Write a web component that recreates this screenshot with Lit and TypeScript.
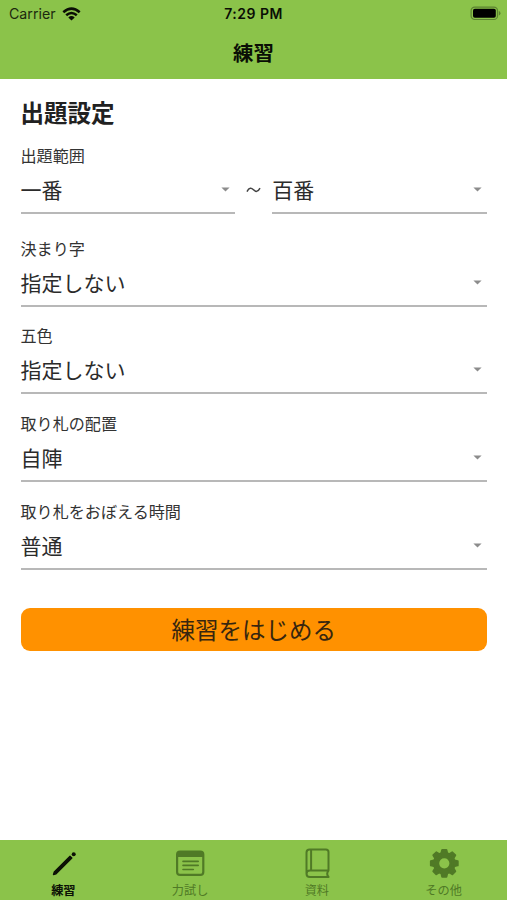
import { LitElement, html, css, svg } from "lit";
import { customElement, property } from "lit/decorators.js";

const icons = {
  pencil: svg`<path d="M5.4 26.6 L6.2 23.9 L22 8.1 L23.9 10 L8.1 25.8 Z" fill="currentColor" stroke="currentColor" stroke-width="1.2" stroke-linejoin="round"/><circle cx="25.7" cy="6.3" r="2" fill="currentColor"/>`,
  list: svg`<rect x="2.1" y="3.6" width="26.2" height="23.3" rx="3" fill="none" stroke="currentColor" stroke-width="2.2"/><path d="M2 6Q2 3.5 5 3.5H25.4Q28.4 3.5 28.4 6V9H2Z" fill="currentColor"/><path d="M8 13.4H23.2M8 17.4H23.2M8 21.5H18.3" stroke="currentColor" stroke-width="1.6" stroke-linecap="round"/>`,
  book: svg`<path d="M26.5 22.6V4Q26.5 1.4 23.9 1.4H7.7Q4.5 1.4 4.5 4.6V25.8Q4.5 29 7.9 29H26.5M4.5 26Q4.5 22.6 8 22.6H26.5Q23.9 25.8 26.5 29M9.1 1.4V22.6" fill="none" stroke="currentColor" stroke-width="2" stroke-linejoin="round" stroke-linecap="round"/>`,
  gear: svg`<circle cx="15.3" cy="15.3" r="8.2" fill="none" stroke="currentColor" stroke-width="6.2"/>${[0, 45, 90, 135, 180, 225, 270, 315].map(
    (a) => svg`<path d="M12 7L13.2 1.9H17.4L18.6 7Z" fill="currentColor" stroke="currentColor" stroke-width="2" stroke-linejoin="round" transform="rotate(${a} 15.3 15.3)"/>`
  )}`,
};

@customElement("select-field")
class SelectField extends LitElement {
  @property() value = "";

  static styles = css`
    :host { display: block; }
    .box {
      display: flex;
      align-items: center;
      justify-content: space-between;
      height: 48px;
      box-sizing: border-box;
      border-bottom: 2px solid #b8b8b8;
      padding-right: 5px;
      font-size: 21px;
      line-height: 30px;
      color: #2b2b2b;
    }
    .arrow { width: 9px; height: 5px; fill: #8c8c8c; display: block; margin-top: 1px; }
  `;

  render() {
    return html`<div class="box">
      <span>${this.value}</span>
      <svg class="arrow" viewBox="0 0 9 5"><path d="M.4 .4H8.6L4.5 4.6Z" /></svg>
    </div>`;
  }
}

@customElement("app-root")
class AppRoot extends LitElement {
  static styles = css`
    :host {
      display: flex;
      flex-direction: column;
      height: 900px;
      background: #fff;
      font-family: "Noto Sans CJK JP", sans-serif;
      color: #212121;
      overflow: hidden;
    }
    header { height: 79px; background: #8bc34a; color: #0a0e05; flex: none; }
    .status {
      display: grid;
      grid-template-columns: 1fr auto 1fr;
      align-items: center;
      height: 27px;
      padding: 0 6px 0 9px;
      font: 14.2px/20px Inter, sans-serif;
    }
    .carrier { display: flex; align-items: center; gap: 6px; color: #1c290e; }
    .time { font-weight: 600; font-size: 14px; letter-spacing: 0.5px; margin-right: 3px; }
    .wifi { width: 19px; height: 14px; display: block; }
    .battery { width: 31px; height: 15px; display: block; justify-self: end; }
    .bar {
      display: flex;
      justify-content: center;
      align-items: center;
      height: 49px;
      font-size: 20.4px;
      font-weight: 700;
    }
    main { flex: 1; padding: 14.4px 20px 0 20.5px; }
    h1 { margin: 0; padding-top: 0.6px; font-size: 23.5px; line-height: 36px; height: 52px; box-sizing: border-box; font-weight: 700; }
    .label { font-size: 16.1px; line-height: 20px; height: 21px; color: #333; }
    .group { height: 87.6px; }
    .range { height: 92.4px; }
    .pair {
      display: grid;
      grid-template-columns: 1fr 37px 1fr;
      align-items: center;
    }
    .tilde { display: flex; justify-content: center; }
    .tilde svg { width: 15px; height: 8px; display: block; }
    .start {
      display: flex;
      align-items: center;
      justify-content: center;
      width: 100%;
      height: 43px;
      margin-top: 20px;
      padding: 0 0 2px;
      border: 0;
      border-radius: 9px;
      background: #ff9100;
      color: #37260f;
      font: 400 23.5px/34px "Noto Sans CJK JP", sans-serif;
    }
    nav { display: grid; grid-template-columns: repeat(4, 1fr); height: 60px; background: #8bc34a; flex: none; }
    .tab {
      display: flex;
      flex-direction: column;
      align-items: center;
      padding-top: 7.5px;
      gap: 4.5px;
      color: #507a26;
      font-size: 12.2px;
      line-height: 16px;
    }
    .tab svg { width: 30px; height: 30px; display: block; }
    .active { color: #0c1106; font-weight: 700; }
  `;

  fields = [
    ["決まり字", "指定しない"],
    ["五色", "指定しない"],
    ["取り札の配置", "自陣"],
    ["取り札をおぼえる時間", "普通"],
  ];

  tabs = [
    { name: "練習", icon: icons.pencil, active: true },
    { name: "力試し", icon: icons.list, active: false },
    { name: "資料", icon: icons.book, active: false },
    { name: "その他", icon: icons.gear, active: false },
  ];

  render() {
    return html`
      <header>
        <div class="status">
          <span class="carrier">Carrier
            <svg class="wifi" viewBox="0 0 19 14" fill="none" stroke="#0a0e05" stroke-width="2.5">
              <path d="M1.3 5.3Q9.5-2.1 17.7 5.3M4.2 8.3Q9.5 3.6 14.8 8.3" />
              <path d="M6.3 10.4Q9.5 7.8 12.7 10.4L9.5 13.6Z" fill="#0a0e05" stroke="none" />
            </svg>
          </span>
          <span class="time">7:29 PM</span>
          <svg class="battery" viewBox="0 0 31 15">
            <rect x="1.1" y="1.1" width="26.4" height="12.4" rx="3.6" fill="none" stroke="#5c8331" stroke-width="1.2" />
            <rect x="3" y="2.8" width="22.8" height="9" rx="1.8" fill="#000" />
            <path d="M28.8 5V9.6Q30.5 9 30.5 7.3T28.8 5Z" fill="#5c8331" />
          </svg>
        </div>
        <div class="bar">練習</div>
      </header>
      <main>
        <h1>出題設定</h1>
        <div class="range">
          <div class="label">出題範囲</div>
          <div class="pair">
            <select-field .value=${"一番"}></select-field>
            <span class="tilde"><svg viewBox="0 0 15 8"><path d="M1 5.6C3.2 1.2 5.4 1.7 7.5 3.8S11.8 6.4 14 2.2" fill="none" stroke="#444" stroke-width="1.5" /></svg></span>
            <select-field .value=${"百番"}></select-field>
          </div>
        </div>
        ${this.fields.map(
          ([label, value]) => html`<div class="group">
            <div class="label">${label}</div>
            <select-field .value=${value}></select-field>
          </div>`
        )}
        <button class="start">練習をはじめる</button>
      </main>
      <nav>
        ${this.tabs.map(
          (t) => html`<div class=${t.active ? "tab active" : "tab"}>
            <svg viewBox="0 0 30 30">${t.icon}</svg>
            <span>${t.name}</span>
          </div>`
        )}
      </nav>
    `;
  }
}
